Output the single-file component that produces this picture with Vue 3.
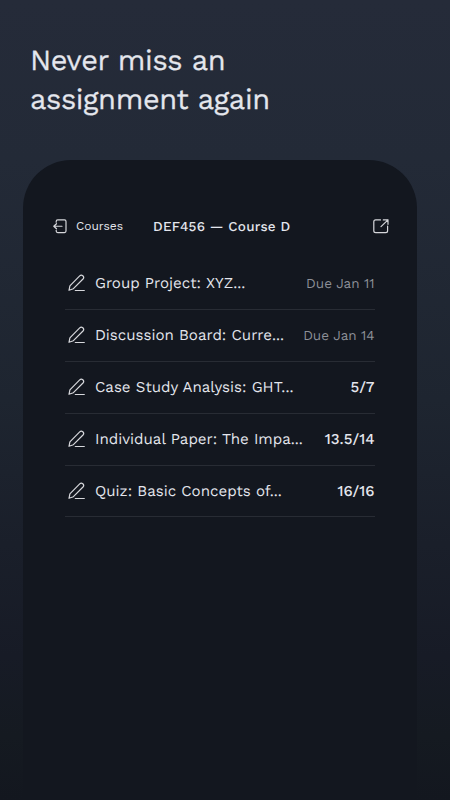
<script setup>
import { ref } from "vue";

const course = ref("DEF456 — Course D");

const assignments = ref([
  { id: 1, title: "Group Project: XYZ...", due: "Due Jan 11" },
  { id: 2, title: "Discussion Board: Curre...", due: "Due Jan 14" },
  { id: 3, title: "Case Study Analysis: GHT...", score: "5/7" },
  { id: 4, title: "Individual Paper: The Impa...", score: "13.5/14" },
  { id: 5, title: "Quiz: Basic Concepts of...", score: "16/16" },
]);
</script>

<template>
  <main class="page">
    <h1 class="headline">Never miss an<br />assignment again</h1>

    <section class="panel">
      <header class="panel-header">
        <button class="back-btn">
          <svg viewBox="0 0 14 15" class="back-icon">
            <path d="M3.2 3.2V2.4Q3.2 .9 4.7 .9H11.5Q13 .9 13 2.4V12.1Q13 13.6 11.5 13.6H4.7Q3.2 13.6 3.2 12.1V11.3" />
            <path d="M9 7.25H.8M3.5 4.7L.8 7.25L3.5 9.8" />
          </svg>
          <span>Courses</span>
        </button>
        <h2 class="course-name">{{ course }}</h2>
        <button class="open-btn" title="Open course">
          <svg viewBox="0 0 16 15" class="open-icon">
            <path d="M7.5 .9H2.7Q.8 .9 .8 2.8V11.8Q.8 13.7 2.7 13.7H12.7Q14.6 13.7 14.6 11.8V7.2" />
            <path d="M10.3 .9H15V5.3M15 .9L8 7.6" />
          </svg>
        </button>
      </header>

      <ul class="assignments">
        <li v-for="item in assignments" :key="item.id" class="assignment">
          <svg viewBox="0 0 18 18" class="edit-icon">
            <path d="M1 16.3L1.9 11.8L11.7 1.9Q13.2 .4 14.8 1.7Q16.5 3.3 15 5L5.4 14.7Z" />
            <path d="M7.3 16.5H16.3" />
          </svg>
          <span class="title">{{ item.title }}</span>
          <span v-if="item.score" class="score">{{ item.score }}</span>
          <span v-else class="due">{{ item.due }}</span>
        </li>
      </ul>
    </section>
  </main>
</template>

<style>
body {
  margin: 0;
  background: #141820;
}
</style>

<style scoped>
.page {
  box-sizing: border-box;
  height: 800px;
  padding: 42px 33px 0 23px;
  display: flex;
  flex-direction: column;
  overflow: hidden;
  background: linear-gradient(#252b39 0%, #232a37 20%, #1e2530 50%, #1a1f2a 68%, #171b26 82%, #151a21 92%, #13171f 100%);
  color: #e4e6ed;
  font-family: "Work Sans", Inter, "Liberation Sans", sans-serif;
  text-rendering: geometricPrecision;
}

.headline {
  margin: 0 0 0 7px;
  font-size: 29px;
  font-weight: 400;
  line-height: 38.5px;
  letter-spacing: -0.4px;
  -webkit-text-stroke: 0.25px currentColor;
}

.panel {
  box-sizing: border-box;
  flex: 1;
  margin-top: 41px;
  padding: 53px 28px 0 30px;
  border-radius: 48px 48px 0 0;
  background: #13171f;
}

.panel-header {
  display: flex;
  align-items: center;
  height: 26px;
}

.back-btn,
.open-btn {
  display: flex;
  align-items: center;
  padding: 0;
  border: 0;
  background: none;
  color: inherit;
  font: inherit;
}

.back-btn {
  width: 100px;
  gap: 9px;
  font-size: 12px;
}

.open-btn {
  margin-left: auto;
}

svg {
  flex: none;
  fill: none;
  stroke: #d6d7db;
  stroke-width: 1.2;
  stroke-linecap: round;
  stroke-linejoin: round;
}

.back-icon {
  width: 14px;
  height: 15px;
}

.open-icon {
  width: 16px;
  height: 15px;
}

.course-name {
  margin: 0;
  padding-top: 1px;
  font-size: 13.5px;
  font-weight: 500;
  letter-spacing: 0.25px;
  white-space: nowrap;
}

.assignments {
  margin: 19px 14.5px 0 12px;
  padding: 0;
  list-style: none;
}

.assignment {
  box-sizing: border-box;
  display: flex;
  align-items: center;
  height: 51.9px;
  padding-left: 3px;
  border-bottom: 1px solid #282c34;
  white-space: nowrap;
}

.edit-icon {
  width: 18px;
  height: 18px;
  margin-right: 9px;
}

.title {
  padding-bottom: 0.9px;
  font-size: 15.1px;
}

.due,
.score {
  margin-left: auto;
}

.due {
  padding-top: 1px;
  color: #8d9098;
  font-size: 13.5px;
}

.score {
  padding-bottom: 0.5px;
  font-size: 15px;
  font-weight: 500;
}
</style>
